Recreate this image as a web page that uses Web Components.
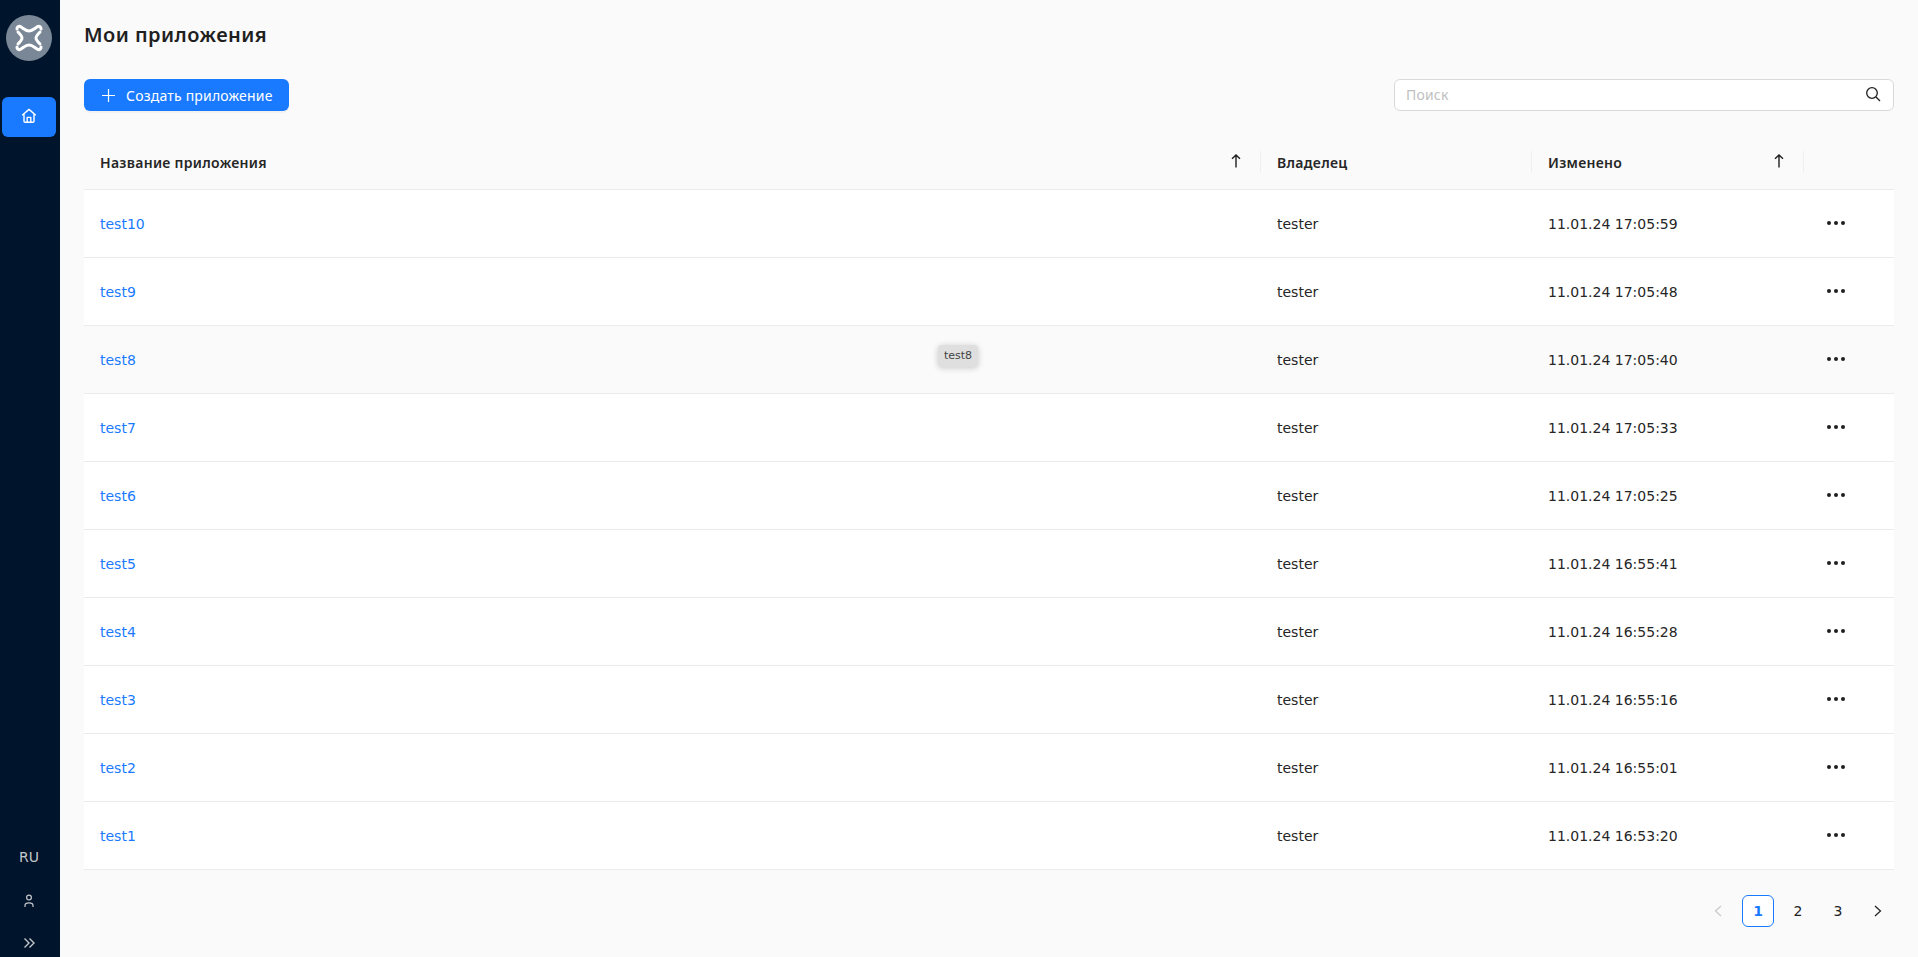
<!DOCTYPE html>
<html lang="ru">
<head>
<meta charset="utf-8">
<title>Мои приложения</title>
<style>
  html, body { margin: 0; height: 100%; }
  body {
    font-family: "DejaVu Sans", "Noto Sans", sans-serif;
    background: #fafafa;
    overflow: hidden;
  }
</style>
</head>
<body>
<app-shell>
  <app-sidebar slot="side"></app-sidebar>
  <apps-page></apps-page>
</app-shell>

<script>
(function () {
  const PAGE_ROWS = [
    ["test10", "11.01.24 17:05:59"],
    ["test9", "11.01.24 17:05:48"],
    ["test8", "11.01.24 17:05:40"],
    ["test7", "11.01.24 17:05:33"],
    ["test6", "11.01.24 17:05:25"],
    ["test5", "11.01.24 16:55:41"],
    ["test4", "11.01.24 16:55:28"],
    ["test3", "11.01.24 16:55:16"],
    ["test2", "11.01.24 16:55:01"],
    ["test1", "11.01.24 16:53:20"],
  ];
  const CYR_FONT = '"Noto Sans", "DejaVu Sans", sans-serif';

  customElements.define(
    "app-shell",
    class AppShell extends HTMLElement {
      constructor() {
        super();
        this.attachShadow({ mode: "open" }).innerHTML = `
          <style>
            :host { display: flex; height: 957px; }
            main { flex: 1; min-width: 0; }
          </style>
          <slot name="side"></slot>
          <main><slot></slot></main>`;
      }
    }
  );

  customElements.define(
    "app-sidebar",
    class AppSidebar extends HTMLElement {
      constructor() {
        super();
        this.attachShadow({ mode: "open" }).innerHTML = `
          <style>
            :host {
              display: flex;
              flex-direction: column;
              align-items: center;
              width: 60px;
              flex: none;
              box-sizing: border-box;
              padding-right: 2px;
              background: #00142b;
              color: #c4c8cd;
            }
            .logo { margin-top: 15px; width: 46px; height: 46px; display: block; }
            .home {
              margin-top: 36px;
              width: 54px;
              height: 40px;
              border-radius: 6px;
              background: #1a7aff;
              display: flex;
              align-items: center;
              justify-content: center;
              padding-bottom: 2px;
              box-sizing: border-box;
            }
            .bottom {
              margin-top: auto;
              display: flex;
              flex-direction: column;
              align-items: center;
            }
            .lang { font-size: 14px; line-height: 20px; margin-bottom: 27px; }
            .user { display: block; margin-bottom: 28px; }
            .more { display: block; margin-bottom: 7px; }
          </style>
          <svg class="logo" viewBox="0 0 46 46">
            <circle cx="23" cy="23" r="23" fill="#7a8796"/>
            <g fill="none" stroke="#fff" stroke-width="3" stroke-linecap="round" stroke-linejoin="round">
              <path d="M11 14 C11 11 14 11 15 12 C18 14 20 16 23 16 C26 16 28 14 31 12 C32 11 35 11 35 14"/>
              <path d="M11 32 C11 35 14 35 15 34 C18 32 20 30 23 30 C26 30 28 32 31 34 C32 35 35 35 35 32"/>
              <path d="M12 17 C14 19 16 21 16 23 C16 25 14 27 12 29"/>
              <path d="M34 17 C32 19 30 21 30 23 C30 25 32 27 34 29"/>
            </g>
          </svg>
          <div class="home">
            <svg width="16" height="16" viewBox="0 0 16 16" fill="none" stroke="#fff" stroke-width="1.4" stroke-linejoin="round">
              <path d="M1.2 7.2 8 1.4l6.8 5.8M3 6v7.2c0 .7.4 1.1 1.1 1.1h7.8c.7 0 1.1-.4 1.1-1.1V6"/>
              <path d="M6.2 14.2V9.4h3.6v4.8"/>
            </svg>
          </div>
          <div class="bottom">
            <span class="lang">RU</span>
            <svg class="user" width="14" height="14" viewBox="0 0 14 14" fill="none" stroke="#c4c8cd" stroke-width="1.2">
              <circle cx="7" cy="3.6" r="2.4"/>
              <path d="M3 13v-1.5C3 9.6 4.4 8.8 7 8.8s4 .8 4 2.7V13"/>
            </svg>
            <svg class="more" width="14" height="14" viewBox="0 0 14 14" fill="none" stroke="#c4c8cd" stroke-width="1.4">
              <path d="M2.5 2.5 7 7l-4.500 4.500M7.500 2.500 12 7l-4.500 4.500"/>
            </svg>
          </div>`;
      }
    }
  );

  customElements.define(
    "app-button",
    class AppButton extends HTMLElement {
      constructor() {
        super();
        this.attachShadow({ mode: "open" }).innerHTML = `
          <style>
            :host {
              display: inline-flex;
              align-items: center;
              gap: 11px;
              height: 32px;
              width: 205px;
              box-sizing: border-box;
              padding-left: 18px;
              background: #1a7aff;
              color: #fff;
              border-radius: 6px;
              font-family: ${CYR_FONT};
              font-size: 14px;
              letter-spacing: 0.2px;
              box-shadow: 0 2px 0 rgba(0, 0, 0, 0.03);
            }
          </style>
          <svg width="13" height="13" viewBox="0 0 13 13" stroke="#fff" stroke-width="1.2"><path d="M6.500 0v13M0 6.500h13"/></svg>
          <slot></slot>`;
      }
    }
  );

  customElements.define(
    "search-box",
    class SearchBox extends HTMLElement {
      constructor() {
        super();
        this.attachShadow({ mode: "open" }).innerHTML = `
          <style>
            :host {
              display: flex;
              align-items: center;
              justify-content: space-between;
              width: 500px;
              height: 32px;
              box-sizing: border-box;
              padding: 0 12px 2px 11px;
              background: #fff;
              border: 1px solid #d9d9d9;
              border-radius: 6px;
              font-family: ${CYR_FONT};
              font-size: 14px;
              letter-spacing: 0.2px;
              color: #bfbfbf;
            }
          </style>
          <span>Поиск</span>
          <svg width="16" height="16" viewBox="0 0 16 16" fill="none" stroke="#1f1f1f" stroke-width="1.300">
            <circle cx="7" cy="7" r="5.300"/><path d="m11 11 4 4"/>
          </svg>`;
      }
    }
  );

  const sortIcon = `
    <svg width="10" height="14" viewBox="0 0 10 14" fill="none" stroke="#1f1f1f" stroke-width="1.400">
      <path d="M5 13.500V1M1 4.800 5 1l4 3.800"/>
    </svg>`;

  customElements.define(
    "apps-table",
    class AppsTable extends HTMLElement {
      constructor() {
        super();
        const rows = PAGE_ROWS.map(
          ([name, changed]) => `
            <div class="row${name === "test8" ? " hover" : ""}">
              <div class="cell"><a>${name}</a></div>
              <div class="cell">tester</div>
              <div class="cell">${changed}</div>
              <div class="cell dots"><i></i><i></i><i></i></div>
              ${name === "test8" ? '<span class="tip">test8</span>' : ""}
            </div>`
        ).join("");
        this.attachShadow({ mode: "open" }).innerHTML = `
          <style>
            :host { display: block; font-size: 14px; color: #262626; }
            .head, .row {
              display: grid;
              grid-template-columns: 1177px 271px 272px 90px;
              position: relative;
            }
            .head {
              height: 54px;
              border-bottom: 1px solid #ebebeb;
              font-family: ${CYR_FONT};
              font-weight: 600;
              letter-spacing: 0.3px;
            }
            .th {
              display: flex;
              align-items: center;
              justify-content: space-between;
              padding: 0 20px 0 16px;
              position: relative;
            }
            .th.sep::after {
              content: "";
              position: absolute;
              right: 0;
              top: 16px;
              height: 22px;
              border-right: 1px solid #efefef;
            }
            .th svg { margin-top: -2px; }
            .row { height: 67px; background: #fff; border-bottom: 1px solid #ebebeb; }
            .row.hover { background: #fafafa; }
            .cell { display: flex; align-items: center; padding: 0 16px; }
            a { color: #1a7aff; }
            .dots { gap: 3px; padding-left: 23px; padding-bottom: 2px; }
            .dots i { width: 4px; height: 4px; border-radius: 50%; background: #1f1f1f; }
            .tip {
              position: absolute;
              left: 854px;
              top: 19px;
              padding: 0 6px;
              line-height: 22px;
              font-size: 11px;
              color: #444;
              background: #dfdfdf;
              border-radius: 4px;
              box-shadow: 0 1px 6px rgba(0, 0, 0, 0.2);
            }
          </style>
          <div class="head">
            <div class="th sep"><span>Название приложения</span>${sortIcon}</div>
            <div class="th sep"><span>Владелец</span></div>
            <div class="th sep"><span>Изменено</span>${sortIcon}</div>
            <div class="th"></div>
          </div>
          ${rows}`;
      }
    }
  );

  customElements.define(
    "page-nav",
    class PageNav extends HTMLElement {
      constructor() {
        super();
        this.attachShadow({ mode: "open" }).innerHTML = `
          <style>
            :host {
              display: flex;
              justify-content: flex-end;
              gap: 8px;
              font-size: 14px;
              color: #1f1f1f;
            }
            div {
              width: 32px;
              height: 32px;
              box-sizing: border-box;
              display: flex;
              align-items: center;
              justify-content: center;
            }
            .on {
              border: 1px solid #1a7aff;
              border-radius: 6px;
              background: #fff;
              color: #1a7aff;
              font-weight: 700;
            }
          </style>
          <div><svg width="8" height="12" viewBox="0 0 8 12" fill="none" stroke="#c9c9c9" stroke-width="1.200"><path d="M7 1 1.500 6 7 11"/></svg></div>
          <div class="on">1</div>
          <div>2</div>
          <div>3</div>
          <div><svg width="8" height="12" viewBox="0 0 8 12" fill="none" stroke="#1f1f1f" stroke-width="1.200"><path d="M1 1l5.500 5L1 11"/></svg></div>`;
      }
    }
  );

  customElements.define(
    "apps-page",
    class AppsPage extends HTMLElement {
      constructor() {
        super();
        this.attachShadow({ mode: "open" }).innerHTML = `
          <style>
            :host { display: block; padding: 24px 24px 0; }
            h1 {
              margin: 0;
              font-family: ${CYR_FONT};
              font-size: 20px;
              line-height: 22px;
              font-weight: 600;
              letter-spacing: 0.47px;
              color: #1f1f1f;
            }
            .tools {
              display: flex;
              justify-content: space-between;
              margin: 33px 0 24px;
            }
            page-nav { margin-top: 25px; }
          </style>
          <h1>Мои приложения</h1>
          <div class="tools">
            <app-button>Создать приложение</app-button>
            <search-box></search-box>
          </div>
          <apps-table></apps-table>
          <page-nav></page-nav>`;
      }
    }
  );
})();
</script>
</body>
</html>
